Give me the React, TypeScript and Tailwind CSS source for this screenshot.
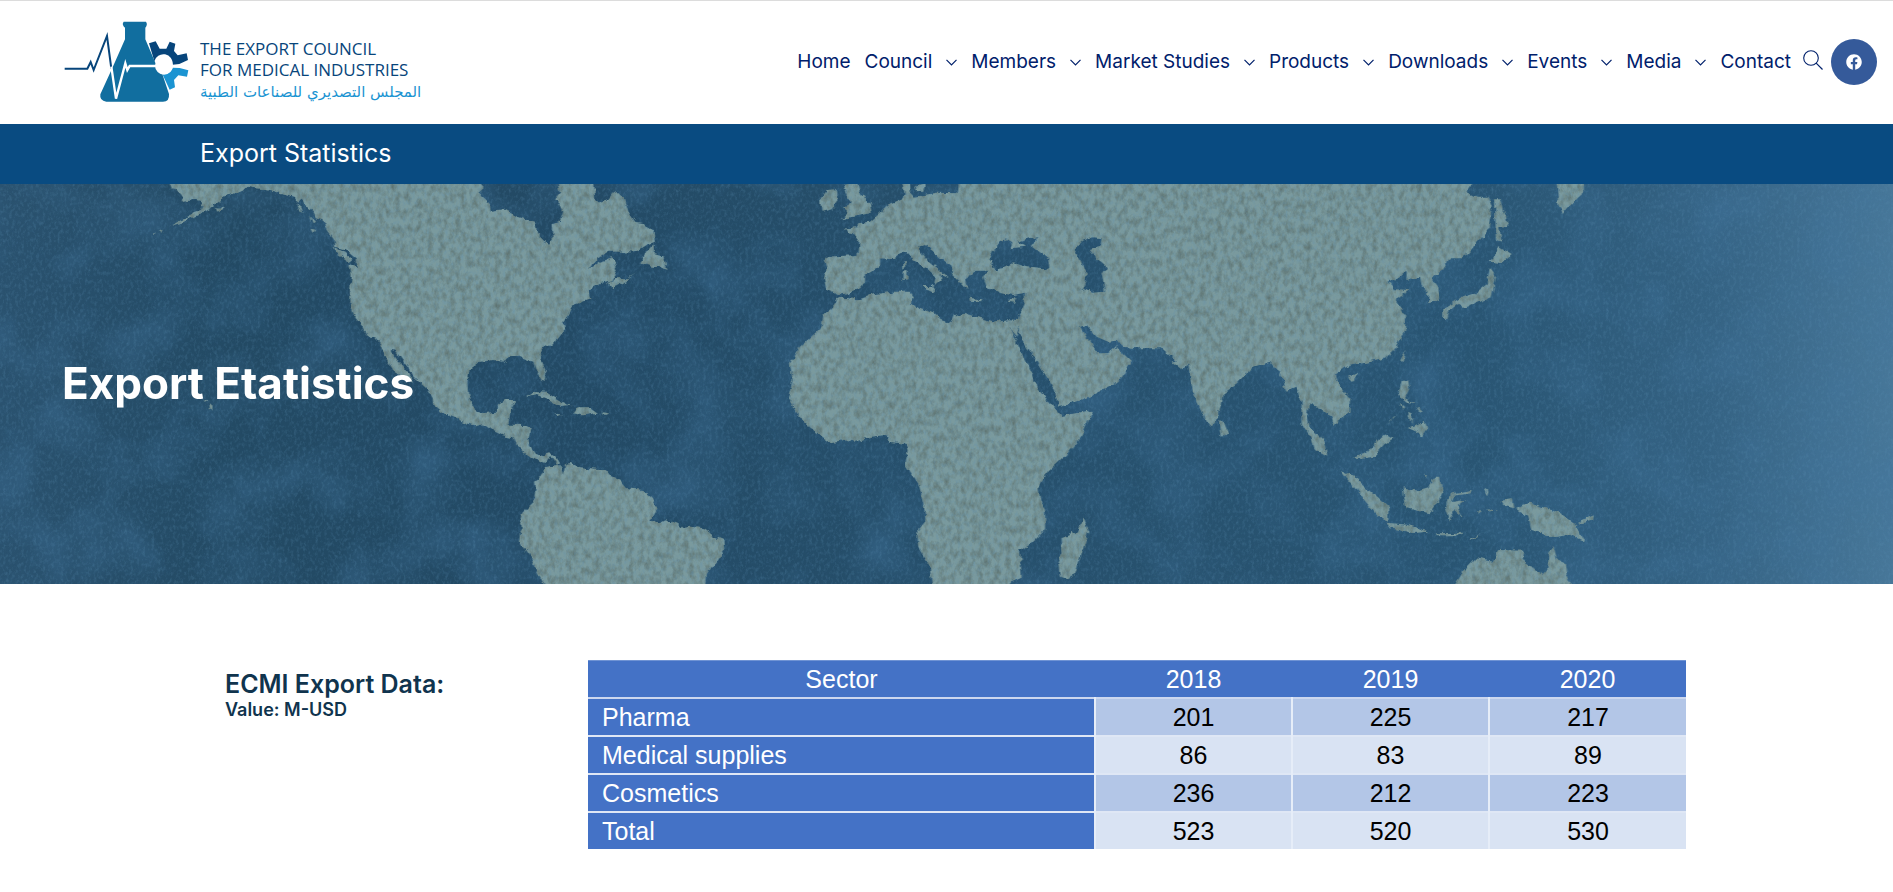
import { FaFacebook } from "react-icons/fa";

type NavItem = { label: string; hasMenu?: boolean };
type Row = { sector: string; values: number[] };

const NAV: NavItem[] = [
  { label: "Home" },
  { label: "Council", hasMenu: true },
  { label: "Members", hasMenu: true },
  { label: "Market Studies", hasMenu: true },
  { label: "Products", hasMenu: true },
  { label: "Downloads", hasMenu: true },
  { label: "Events", hasMenu: true },
  { label: "Media", hasMenu: true },
  { label: "Contact" },
];

const YEARS = [2018, 2019, 2020];

const ROWS: Row[] = [
  { sector: "Pharma", values: [201, 225, 217] },
  { sector: "Medical supplies", values: [86, 83, 89] },
  { sector: "Cosmetics", values: [236, 212, 223] },
  { sector: "Total", values: [523, 520, 530] },
];

function LogoMark() {
  return (
    <svg viewBox="45 60 375 249" className="h-[83px] w-[125px] shrink-0" aria-hidden="true">
      {/* gear, dark upper half and light lower half */}
      <path
        d="M300 130L320 124L332 146L352 146L362 125L379 131L375 153L386 166L413 160L417 180L391 192L371 194A28 28 0 0 0 316 184Z"
        fill="#07457b"
      />
      <path
        d="M371 203L392 204L418 211L414 230L388 226L375 240L378 262L362 269L340 222A28 28 0 0 0 371 203Z"
        fill="#1b94d2"
      />
      <path
        d="M224 65H291Q297 73 289 83V118L319 188L340 222L360 282Q362 305 342 305H172Q151 303 154 283L190 204L228 118V83Q217 73 224 65Z"
        fill="#116e9f"
      />
      <path d="M47 206H115L125 186L134 210L174 108L187 206" fill="none" stroke="#07457b" strokeWidth="6" />
      <path d="M187 200L201 296L229 190L235 210L242 198H326" fill="none" stroke="#fff" strokeWidth="7" />
      <circle cx="345" cy="197" r="27" fill="#fff" />
    </svg>
  );
}

function Chevron() {
  return (
    <svg viewBox="0 0 11 7" className="h-[7px] w-[11px]" fill="none" stroke="currentColor" aria-hidden="true">
      <path d="M0.5 0.8L5.5 5.8L10.5 0.8" strokeWidth="1.2" />
    </svg>
  );
}

function SearchIcon() {
  return (
    <svg viewBox="0 0 20 20" className="h-5 w-5" fill="none" stroke="currentColor" aria-hidden="true">
      <circle cx="8" cy="8" r="7.3" strokeWidth="1.1" />
      <path d="M13.2 13.2L19.5 19.5" strokeWidth="1.2" />
    </svg>
  );
}

function WorldMap() {
  return (
    <svg
      viewBox="0 0 5679 1200"
      preserveAspectRatio="xMidYMid slice"
      className="absolute inset-0 h-full w-full"
      aria-hidden="true"
    >
      <defs>
        <linearGradient id="ocean">
          <stop offset="0" stopColor="#2a526f" />
          <stop offset="0.12" stopColor="#234a64" />
          <stop offset="0.3" stopColor="#234a65" />
          <stop offset="0.5" stopColor="#264f6b" />
          <stop offset="0.78" stopColor="#295573" />
          <stop offset="0.9" stopColor="#346283" />
          <stop offset="1" stopColor="#477799" />
        </linearGradient>
        {/* ragged coastline plus darker speckles kept inside the land */}
        <filter id="coast" x="0" y="0" width="100%" height="100%" colorInterpolationFilters="sRGB">
          <feTurbulence type="fractalNoise" baseFrequency="0.045" numOctaves="3" seed="4" />
          <feDisplacementMap in="SourceGraphic" scale="18" xChannelSelector="R" yChannelSelector="G" result="land" />
          <feTurbulence type="fractalNoise" baseFrequency="0.06 0.04" numOctaves="4" seed="2" />
          <feColorMatrix values="0 0 0 0 0.36  0 0 0 0 0.44  0 0 0 0 0.43  0 1.6 0 0 -0.6" />
          <feComposite in2="land" operator="in" result="spots" />
          <feMerge>
            <feMergeNode in="land" />
            <feMergeNode in="spots" />
          </feMerge>
        </filter>
        <filter id="grain" x="0" y="0" width="100%" height="100%" colorInterpolationFilters="sRGB">
          <feTurbulence type="fractalNoise" baseFrequency="0.11 0.08" numOctaves="4" seed="9" />
          <feColorMatrix values="0 0 0 0 0.36  0 0 0 0 0.56  0 0 0 0 0.7  1.8 0 0 0 -0.78" />
        </filter>
        <filter id="clouds" x="0" y="0" width="100%" height="100%" colorInterpolationFilters="sRGB">
          <feTurbulence type="fractalNoise" baseFrequency="0.005" numOctaves="8" seed="21" />
          <feColorMatrix values="0 0 0 0 0.26  0 0 0 0 0.46  0 0 0 0 0.62  0 2.2 0 0 -0.9" />
        </filter>
      </defs>
      <rect width="5679" height="1200" fill="url(#ocean)" />
      <rect width="5679" height="1200" filter="url(#clouds)" opacity="0.4" />
      <g filter="url(#coast)" fill="#7a9a9e">
        {/* Americas */}
        <g transform="translate(0 -12)">
          <path d="M505 0L515 28L530 30L545 45L550 62L575 58L600 62L608 75L600 90L580 97L565 112L540 122L510 138L545 128L590 108L615 92L640 78L660 62L670 50L685 45L725 35L740 20L760 24L800 28L845 40L880 50L895 65L905 55L915 72L940 95L950 115L970 120L975 140L990 160L1005 180L1005 200L1040 210L1070 235L1073 262L1048 255L1055 290L1050 330L1052 380L1060 405L1080 430L1100 468L1125 472L1140 490L1150 520L1165 545L1180 570L1205 588L1240 606L1220 575L1200 550L1180 525L1175 512L1188 515L1225 565L1240 590L1285 630L1298 655L1300 675L1330 700L1360 712L1400 730L1425 736L1450 730L1480 752L1505 765L1538 772L1545 790L1565 808L1585 828L1605 838L1632 852L1640 838L1655 832L1672 856L1680 850L1668 830L1650 820L1625 828L1605 822L1590 800L1588 775L1595 745L1580 735L1525 734L1530 700L1535 680L1548 660L1515 660L1498 672L1490 695L1450 700L1425 690L1405 650L1402 610L1408 570L1440 545L1480 540L1510 545L1520 532L1560 530L1600 545L1610 575L1625 600L1638 602L1638 575L1625 545L1622 520L1635 500L1670 480L1695 450L1690 430L1700 415L1710 395L1720 375L1770 358L1765 330L1800 310L1840 300L1850 285L1840 265L1850 245L1835 235L1800 245L1765 270L1785 240L1825 215L1910 214L1940 195L1965 185L1960 155L1935 130L1905 125L1885 95L1875 60L1848 32L1825 60L1800 68L1785 55L1782 0L1672 0L1680 40L1665 60L1680 75L1690 95L1680 125L1655 135L1658 180L1650 198L1612 160L1605 125L1555 112L1510 88L1475 92L1470 70L1442 45L1445 0Z" />
          <path d="M1635 862L1670 855L1682 856L1688 884L1696 855L1715 852L1740 865L1800 870L1820 870L1835 888L1860 900L1880 925L1930 930L1955 950L1972 988L1950 1025L1975 1030L2000 1018L2030 1028L2048 1045L2070 1040L2110 1045L2145 1070L2170 1080L2172 1110L2150 1145L2135 1160L2120 1185L2118 1230H1640L1610 1170L1590 1130L1557 1085L1560 1060L1570 1045L1560 1035L1570 995L1602 965L1607 920L1605 905L1620 895Z" />
          <path d="M1825 310L1850 295L1885 295L1908 280L1870 308L1835 325ZM1920 250L1940 215L1960 193L1962 222L1990 230L2002 270L1985 262L1960 260ZM1578 652L1600 636L1640 638L1680 662L1715 675L1680 678L1650 660L1610 645ZM1730 682L1770 682L1793 698L1750 706L1715 700ZM1663 700L1688 704L1675 709ZM1808 697L1828 700L1812 706Z" />
          <path d="M1000 200L1030 215L1060 240L1050 248L1015 225ZM890 68L905 80L910 100L900 90ZM930 108L945 125L938 130ZM934 146L948 150L942 160ZM648 82L672 84L652 95ZM478 148L488 152L480 158ZM458 156L468 159L460 162ZM628 672L642 684L630 692ZM615 660L625 664L618 668Z" />
        </g>
        {/* Europe, Africa, Asia */}
        <g transform="translate(2280 -12)">
          <path
            fillRule="evenodd"
            d="M425 0L435 45L425 58L395 70L380 80L360 100L330 125L295 130L290 142L255 145L262 157L282 160L298 185L296 225L200 230L192 240L200 265L192 300L200 330L235 345L265 338L300 325L315 305L315 285L340 270L360 255L360 235L400 238L425 218L445 220L460 240L500 265L530 290L525 318L545 302L542 285L568 296L530 265L505 245L480 215L478 200L495 195L515 210L540 235L575 260L580 285L605 310L622 330L615 300L625 285L640 272L690 272L670 288L680 320L720 340L760 345L795 338L795 365L780 400L775 420L740 418L700 425L650 410L610 398L585 405L575 430L545 420L520 400L450 375L462 350L450 335L400 335L330 344L290 358L238 352L215 385L190 405L185 440L160 465L120 500L90 550L98 600L85 655L105 690L150 745L215 790L260 780L290 785L330 770L380 765L390 785L435 792L443 810L437 855L475 910L492 980L497 1020L472 1050L475 1100L508 1155L518 1230H750L750 1205L785 1190L780 1115L820 1085L855 1050L855 990L840 960L835 915L870 870L920 825L965 770L995 700L985 692L905 708L888 688L835 625L808 565L775 500L748 442L768 470L780 440L778 465L800 500L835 550L885 630L893 675L905 680L1000 645L1060 615L1090 590L1112 545L1085 520L1068 498L1045 520L1005 520L985 480L960 440L980 435L1010 470L1045 485L1070 482L1085 500L1130 505L1205 505L1230 525L1250 542L1235 545L1265 568L1285 550L1290 590L1300 640L1345 735L1352 742L1375 715L1388 640L1430 610L1480 560L1530 545L1550 570L1570 600L1580 632L1610 620L1625 670L1625 730L1655 775L1665 810L1702 830L1690 780L1650 745L1642 710L1650 670L1680 685L1715 710L1720 732L1768 695L1770 655L1730 605L1725 585L1750 565L1780 555L1820 548L1880 535L1910 500L1935 450L1935 405L1905 360L1945 330L1905 328L1885 305L1910 295L1940 272L1940 300L1980 290L1985 315L2005 335L2005 370L2040 360L2035 320L2015 295L2045 275L2070 235L2110 235L2185 150L2195 80L2185 50L2150 50L2120 35L2145 0ZM445 0L450 35L465 50L530 38L590 40L595 0ZM685 240L700 210L715 185L740 178L760 190L752 205L795 200L772 185L835 168L812 195L865 235L868 260L850 268L800 262L760 250L730 265L705 268ZM945 205L965 185L1000 172L1025 175L1022 200L990 210L1005 230L1035 255L1045 270L1025 275L1035 335L1000 338L968 325L980 285L965 250Z"
          />
          <path d="M250 15L290 5L300 40L330 75L335 98L290 108L243 118L265 98L250 85L275 68L260 50ZM180 55L200 30L230 28L235 60L215 88L185 95ZM466 20L495 12L490 32L470 34ZM428 272L443 270L442 298L428 300ZM430 245L438 242L438 264L430 262ZM482 318L522 318L518 335ZM628 353L664 358L660 364L630 362ZM745 365L772 350L765 368Z" />
          <path d="M972 1015L988 1055L965 1120L945 1185L920 1198L900 1190L895 1150L908 1120L905 1075L950 1055Z" />
        </g>
        {/* South-east Asian islands */}
        <g transform="translate(3240 -12)">
          <path d="M420 725L430 722L445 760L425 770ZM783 873L815 885L880 940L925 980L925 1025L890 1005L845 950ZM922 1028L985 1035L1045 1055L1000 1059L935 1045ZM820 832L860 820L890 785L915 760L940 775L910 795L880 830L835 838ZM968 925L1010 935L1045 925L1060 893L1080 893L1090 930L1070 970L1050 1000L980 985ZM1098 985L1110 942L1175 930L1172 940L1120 948L1115 966L1155 960L1130 978L1146 1008L1122 990L1110 1022ZM975 508L968 550L957 540ZM805 590L830 578L825 600L810 602Z" />
          <path d="M965 602L985 602L988 625L975 655L1005 670L980 665L955 645ZM985 695L998 700L995 728L988 715ZM1010 680L1028 695L1018 698ZM985 745L1035 722L1042 750L1025 772L1010 755ZM948 702L922 732L940 715ZM960 668L975 680L966 686ZM1068 1060L1150 1058L1145 1066L1070 1066ZM1160 1082L1205 1060L1185 1075ZM1098 1074L1120 1082ZM1212 925L1226 935L1220 952ZM1222 988L1255 992L1225 994ZM1195 990L1205 994L1197 999ZM1036 884L1044 886L1040 892Z" />
        </g>
        {/* Japan, New Guinea, Australia */}
        <g transform="translate(4380 -12)">
          <path d="M105 58L120 58L142 138L118 140L125 185L108 180ZM115 200L155 225L125 250L88 245L108 225ZM90 265L108 290L95 350L50 370L10 385L-10 372L-40 395L-45 380L0 355L40 342L80 310ZM-50 383L-30 383L-38 418L-50 415ZM290 0L370 0L372 38L340 65L308 102L295 70ZM165 985L210 968L300 1000L345 1030L375 1085L325 1062L275 1070L215 1050L205 1010ZM122 962L155 958L160 985L130 978ZM355 1025L402 1006L398 1022L360 1031Z" />
          <path d="M-25 1230L10 1175L50 1135L95 1145L115 1110L190 1112L185 1140L250 1185L262 1170L268 1120L280 1098L292 1140L315 1150L320 1185L340 1230Z" />
        </g>
      </g>
      <rect width="5679" height="1200" filter="url(#grain)" opacity="0.35" />
    </svg>
  );
}

export default function App() {
  return (
    <div className="min-h-screen bg-white font-[Inter,sans-serif]">
      <header className="flex h-[124px] items-center justify-between border-t border-[#dcdcdc] pb-px pl-16 pr-4">
        <a href="#" className="flex items-center gap-[11px] pb-px">
          <LogoMark />
          <span className="flex flex-col pt-[18px] font-['Open_Sans',sans-serif] text-[17px] leading-[21px] text-[#07457b]">
            <span>THE EXPORT COUNCIL</span>
            <span>FOR MEDICAL INDUSTRIES</span>
            <span lang="ar" dir="rtl" className="text-left font-['DejaVu_Sans',sans-serif] text-[15px] leading-6 text-[#1b94d2]">
              المجلس التصديري للصناعات الطبية
            </span>
          </span>
        </a>

        <div className="flex items-center text-[#00206b]">
          <nav className="flex items-center gap-[14px] text-[19px]">
            {NAV.map((item) => (
              <a key={item.label} href="#" className="flex items-center gap-[14px] whitespace-nowrap">
                {item.label}
                {item.hasMenu && <Chevron />}
              </a>
            ))}
          </nav>
          <button type="button" aria-label="Search" className="ml-3 pb-1">
            <SearchIcon />
          </button>
          <a
            href="#"
            aria-label="Facebook"
            className="ml-2 flex h-[46px] w-[46px] items-center justify-center rounded-full bg-[#355a9a] text-white"
          >
            <FaFacebook size={16} />
          </a>
        </div>
      </header>

      <div className="flex h-[60px] items-center bg-[#094b81] px-[200px]">
        <p className="text-[25px] text-white">Export Statistics</p>
      </div>

      <section className="relative flex h-[400px] items-center overflow-hidden bg-[#28506c] px-[62px]">
        <WorldMap />
        <h1 className="relative pb-[2px] text-[44px] font-bold text-white">Export Etatistics</h1>
      </section>

      <section className="flex items-start pb-[42px] pl-[225px] pr-[207px] pt-[76px]">
        <div className="w-[363px] shrink-0 pt-[10px] text-[#10344e]">
          <h2 className="text-[25px] font-semibold leading-7">ECMI Export Data:</h2>
          <p className="text-lg font-semibold leading-6">Value: M-USD</p>
        </div>
        <table className="flex-1 table-fixed border-collapse text-center font-['Liberation_Sans',sans-serif] text-[25px] leading-9">
          <thead>
            <tr className="border-b-2 border-t border-b-[#ccd7ef] border-t-[#6f93d4] bg-[#4472c6] text-white">
              <th scope="col" className="w-[507px] p-0 font-normal">Sector</th>
              {YEARS.map((year) => (
                <th key={year} scope="col" className="w-[197px] p-0 font-normal">{year}</th>
              ))}
            </tr>
          </thead>
          <tbody>
            {ROWS.map((row) => (
              <tr key={row.sector} className="border-b-2 border-[#dfe7f5] odd:bg-[#b3c6e7] even:bg-[#d9e3f3] last:border-b-0">
                <th scope="row" className="bg-[#4472c6] py-0 pl-[14px] text-left font-normal text-white">{row.sector}</th>
                {row.values.map((value, i) => (
                  <td key={YEARS[i]} className="border-l-2 border-[#e6edf8] p-0 text-black">{value}</td>
                ))}
              </tr>
            ))}
          </tbody>
        </table>
      </section>
    </div>
  );
}
